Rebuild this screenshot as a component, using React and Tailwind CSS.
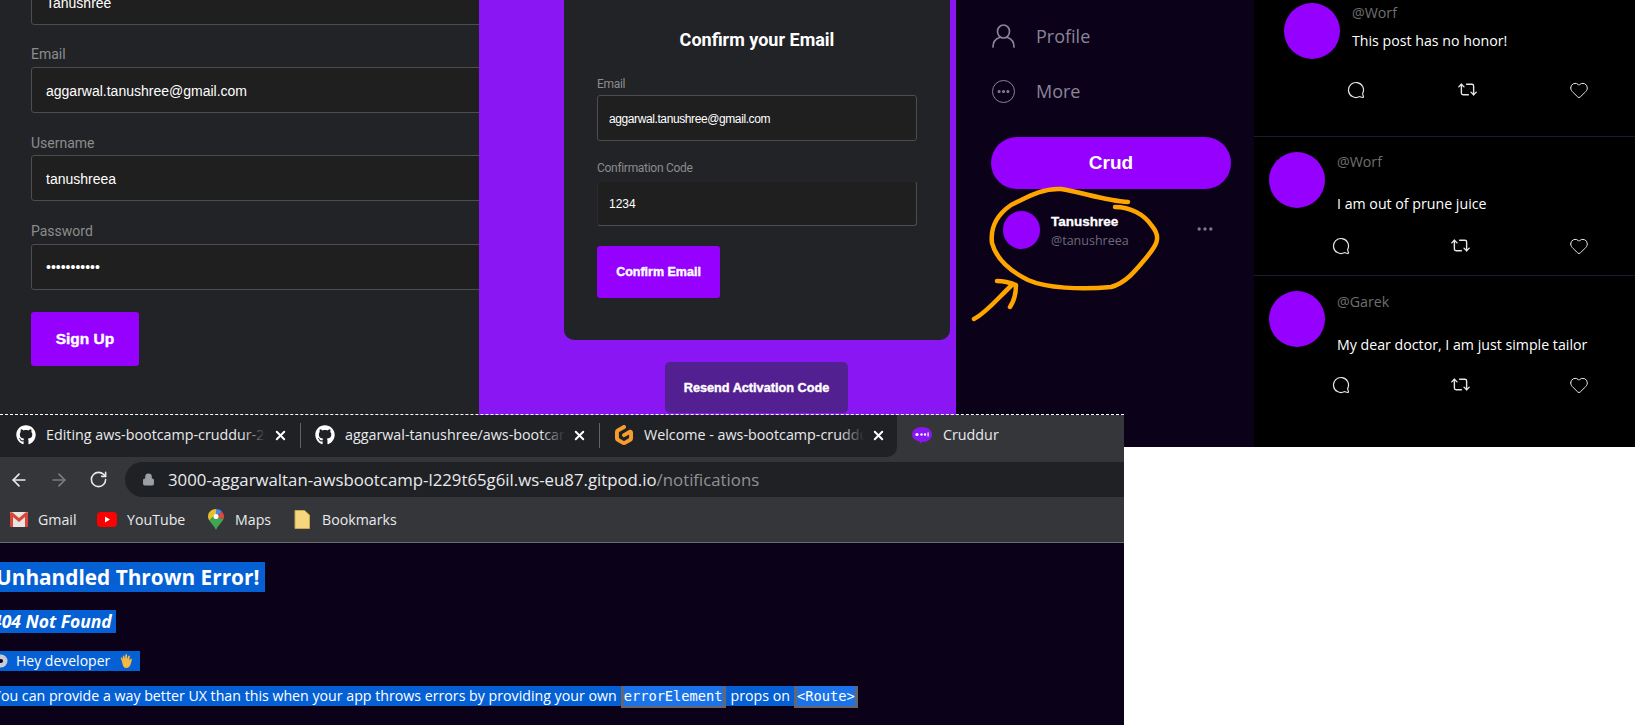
import React from 'react';
import { Ellipsis, MessageCircle, Repeat2, Heart, ArrowLeft, ArrowRight, RotateCw, Lock, X } from 'lucide-react';
import { FaGithub } from 'react-icons/fa';
import { SiGitpod } from 'react-icons/si';

const arial = 'font-["Liberation_Sans",sans-serif]';
const ui = 'font-["Open_Sans",sans-serif]';
const heavy = '[-webkit-text-stroke:0.4px_white]';

// Form input, drawn as a box since nothing here is typed into
const Field = ({ value, className, textClass }) => (
  <div className={`flex items-center rounded-[3px] border border-[#4d4d4d] bg-[#1f1f1f] text-white ${arial} ${className}`}>
    <span className={textClass}>{value}</span>
  </div>
);

const Label = ({ children, className }) => (
  <div className={`h-[18px] font-["Roboto",sans-serif] text-[14px] leading-[18px] text-[#8c8c8c] ${className}`}>{children}</div>
);

const SmallLabel = ({ children, className }) => (
  <div className={`h-[18px] font-["Roboto",sans-serif] text-[12px] leading-[18px] tracking-[-0.3px] text-[#8c8c8c] ${className}`}>{children}</div>
);

const SignUpPanel = () => (
  <div className="h-[447px] w-[479px] shrink-0 overflow-hidden bg-[#212327] pl-[31px]">
    <div className="w-[600px]">
      <Field value="Tanushree" className="-mt-[21px] h-[46px] pl-[14px]" textClass="pt-[2px] text-[14px]" />
      <Label className="mt-[20px]">Email</Label>
      <Field value="aggarwal.tanushree@gmail.com" className="mt-[4px] h-[46px] pl-[14px]" textClass="pt-[2px] text-[14px]" />
      <Label className="mt-[21px]">Username</Label>
      <Field value="tanushreea" className="mt-[3px] h-[46px] pl-[14px]" textClass="pt-[2px] text-[14px]" />
      <Label className="mt-[21px]">Password</Label>
      <Field value="•••••••••••" className="mt-[4px] h-[46px] pl-[14px]" textClass="text-[14px]" />
    </div>
    <button className={`mt-[22px] h-[54px] w-[108px] rounded-[3px] bg-[#9500ff] text-[15.500px] font-bold text-white ${arial} ${heavy}`}>Sign Up</button>
  </div>
);

const ConfirmPanel = () => (
  <div className="h-[447px] w-[477px] shrink-0 bg-[#8a17f3]">
    <div className="ml-[85px] h-[340px] w-[386px] rounded-b-[10px] bg-[#212327] px-[33px] pt-[26px]">
      <h2 className='h-[28px] text-center font-["Roboto",sans-serif] text-[18px] font-bold leading-[28px] text-white'>Confirm your Email</h2>
      <SmallLabel className="mt-[21px]">Email</SmallLabel>
      <Field value="aggarwal.tanushree@gmail.com" className="mt-[2px] h-[46px] pl-[11px]" textClass="pt-[2px] text-[12px] tracking-[-0.4px]" />
      <SmallLabel className="mt-[18px]">Confirmation Code</SmallLabel>
      <Field value="1234" className="mt-[4px] h-[45px] border-t-[#262626] border-l-[#2b2b2b] pl-[11px]" textClass="text-[12px]" />
      <button className={`mt-[20px] h-[52px] w-[123px] rounded-[3px] bg-[#9500ff] text-[12.500px] font-bold text-white ${arial} ${heavy}`}>Confirm Email</button>
    </div>
    <button className={`ml-[186px] mt-[22px] h-[51px] w-[183px] rounded-[5px] bg-[#532091] pt-[3px] text-[12.700px] font-bold text-white ${arial} ${heavy}`}>Resend Activation Code</button>
  </div>
);

const Sidebar = () => (
  <div className="relative h-[447px] w-[298px] shrink-0 bg-[#0b0118] pl-[35px] pt-[20px]">
    <div className="flex h-[32px] items-center gap-[21px] pl-[1px]">
      <svg width="23" height="24" viewBox="0 0 23 24" fill="none" stroke="#8a8598" strokeWidth="1.7" strokeLinecap="round">
        <ellipse cx="11.500" cy="7.500" rx="6" ry="6.500" />
        <path d="M1 23c0-5 2-8 6.500-9.500M22 23c0-5-2-8-6.500-9.500" />
      </svg>
      <span className={`text-[18px] text-[#8a8598] ${ui}`}>Profile</span>
    </div>
    <div className="mt-[23px] flex h-[32px] items-center gap-[21px] pl-[1px]">
      <div className="flex h-[23px] w-[23px] items-center justify-center rounded-full border-[1.5px] border-[#8a8598]">
        <Ellipsis size={15} strokeWidth={3} className="text-[#8a8598]" />
      </div>
      <span className={`text-[18px] text-[#8a8598] ${ui}`}>More</span>
    </div>
    <button className={`mt-[30px] h-[52px] w-[240px] rounded-[26px] bg-[#9500ff] text-[19px] font-bold text-white ${arial}`}>Crud</button>
    <div className="mt-[22px] flex pl-[12px]">
      <div className="h-[38px] w-[37px] rounded-full bg-[#9500ff]" />
      <div className="ml-[11px] pt-[1px]">
        <div className={`h-[20px] text-[13.500px] font-bold leading-[20px] text-white ${arial} [-webkit-text-stroke:0.3px_white]`}>Tanushree</div>
        <div className={`text-[12.500px] leading-[18px] text-[#6e6a7c] ${ui}`}>@tanushreea</div>
      </div>
      <Ellipsis size={20} className="ml-[66px] mt-[8px] text-[#7d7a85]" />
    </div>
    {/* hand drawn ring and arrow on top of the screenshot */}
    <svg className="absolute left-0 top-0" width="298" height="447" viewBox="0 0 298 447" fill="none" stroke="#ffa500" strokeWidth="4.500" strokeLinecap="round" strokeLinejoin="round">
      <path d="M172 202 C150 201 125 192 105 189 C85 188 70 198 55 205 C42 214 34 226 36 243 C40 258 52 270 72 280 C90 288 125 290 155 287 C170 283 180 270 190 258 C200 246 206 238 196 226 C188 214 174 207 159 207" />
      <path d="M18 319 C30 313 42 298 57 284 M41 281 C48 281 55 283 60 285 C60 295 58 301 54 307" />
    </svg>
  </div>
);

const Post = ({ handle, body, className, avatarX, bodyGap, iconGap }) => (
  <div className={`flex pr-[46px] ${className}`}>
    <div className={`h-[56px] w-[56px] shrink-0 rounded-full bg-[#9500ff] ${avatarX}`} />
    <div className={`ml-[12px] flex-1 ${ui}`}>
      <div className="-mt-[1px] text-[14.200px] leading-[22px] text-[#6f6f6f]">{handle}</div>
      <div className={`whitespace-nowrap text-[14.200px] leading-[22px] text-white ${bodyGap}`}>{body}</div>
      <div className={`-ml-[6px] flex items-center justify-between text-[#e6e6e6] ${iconGap}`}>
        <span className="flex w-[20px] justify-center">
          <MessageCircle size={18} strokeWidth={1.6} className="-scale-x-100" />
        </span>
        <Repeat2 size={21} strokeWidth={1.6} />
        <Heart size={20} strokeWidth={1.2} />
      </div>
    </div>
  </div>
);

const Feed = () => (
  <div className="h-[447px] flex-1 bg-black">
    <Post handle="@Worf" body="This post has no honor!" className="h-[137px] border-b border-[#1c1c30] pt-[3px]" avatarX="ml-[30px]" bodyGap="mt-[6px]" iconGap="mt-[27px]" />
    <Post handle="@Worf" body="I am out of prune juice" className="h-[139px] border-b border-[#1c1c30] pt-[15px]" avatarX="ml-[15px]" bodyGap="mt-[20px]" iconGap="mt-[20px]" />
    <Post handle="@Garek" body="My dear doctor, I am just simple tailor" className="pt-[16px]" avatarX="-mt-[1px] ml-[15px]" bodyGap="mt-[21px]" iconGap="mt-[18px]" />
  </div>
);

const Tab = ({ icon, title }) => (
  <div className="flex h-full items-center pb-[2px]">
    {icon}
    <span className={`relative ml-[10px] w-[220px] overflow-hidden whitespace-nowrap text-[14.300px] text-[#e8eaed] ${ui}`}>
      {title}
      <span className="absolute inset-y-0 right-0 w-[24px] bg-gradient-to-r from-transparent to-[#202124]" />
    </span>
    <X size={15} strokeWidth={3} className="ml-[7px] text-white" />
  </div>
);

const Divider = () => <div className="ml-[12px] mr-[14px] mt-[8px] h-[25px] w-px bg-[#5f6368]" />;

const TabStrip = () => (
  <div className="flex h-[42px] bg-[#35363a]">
    <div className="flex h-full w-[897px] rounded-br-[10px] bg-[#202124] pl-[16px]">
      <Tab icon={<FaGithub size={20} className="text-white" />} title="Editing aws-bootcamp-cruddur-2023" />
      <Divider />
      <Tab icon={<FaGithub size={20} className="text-white" />} title="aggarwal-tanushree/aws-bootcamp-cruddur" />
      <Divider />
      <Tab icon={<SiGitpod size={20} className="text-[#f59e2e]" />} title="Welcome - aws-bootcamp-cruddur" />
    </div>
    <div className="flex items-center pb-[2px] pl-[15px]">
      <svg width="20" height="20" viewBox="0 0 20 20">
        <path d="M10 2c5.500 0 10 3 10 7.500S15.500 17 11 17c-.5 0-1 0-1.500 0L8 19l-.5-2.500C3 15.500 0 13 0 9.500 0 5 4.500 2 10 2z" fill="#8a17f3" />
        <circle cx="5" cy="9.500" r="1.600" fill="#fff" />
        <circle cx="9.500" cy="9.500" r="1.200" fill="#fff" />
        <circle cx="13" cy="9.500" r="1.200" fill="#fff" />
        <rect x="15.500" y="7.500" width="1.200" height="4" fill="#fff" />
      </svg>
      <span className={`ml-[11px] text-[14.300px] text-[#e8eaed] ${ui}`}>Cruddur</span>
    </div>
  </div>
);

const Toolbar = () => (
  <div className="flex h-[40px] bg-[#35363a] pl-[9px] pt-[5px]">
    <div className="flex h-[35px] items-center">
      <ArrowLeft size={20} strokeWidth={2} className="text-[#e8eaed]" />
      <ArrowRight size={20} strokeWidth={2} className="ml-[20px] text-[#7b7d81]" />
      <RotateCw size={19} strokeWidth={2} className="ml-[20px] text-[#e8eaed]" />
    </div>
    <div className="ml-[17px] flex h-[35px] flex-1 items-center rounded-l-[18px] bg-[#202124] pl-[17px]">
      <Lock size={13} fill="#9aa0a6" strokeWidth={2} className="text-[#9aa0a6]" />
      <span className={`ml-[13px] whitespace-nowrap text-[16.800px] text-[#e8eaed] ${ui}`}>
        3000-aggarwaltan-awsbootcamp-l229t65g6il.ws-eu87.gitpod.io<span className="text-[#8f9397]">/notifications</span>
      </span>
    </div>
  </div>
);

const Bookmark = ({ icon, label, className }) => (
  <div className={`flex items-center ${className}`}>
    {icon}
    <span className={`text-[14.200px] text-[#e8eaed] ${ui}`}>{label}</span>
  </div>
);

const BookmarksBar = () => (
  <div className="flex h-[46px] items-center border-b border-[#6a6b6e] bg-[#35363a] pl-[10px]">
    <Bookmark
      className="w-[87px] gap-[10px]"
      label="Gmail"
      icon={
        <svg width="18" height="15" viewBox="0 0 18 15">
          <rect width="18" height="15" rx="1" fill="#e8e4e0" />
          <path d="M0 1.500V15h3V5l6 5 6-5v10h3V1.500C18 .5 16.500 0 15.500.5L9 6 2.500.5C1.500 0 0 .5 0 1.500z" fill="#d8453a" />
        </svg>
      }
    />
    <Bookmark
      className="w-[111px] gap-[10px]"
      label="YouTube"
      icon={
        <svg width="20" height="15" viewBox="0 0 20 15">
          <rect width="20" height="15" rx="4" fill="#ff0000" />
          <path d="M8 4.500l5 3-5 3z" fill="#fff" />
        </svg>
      }
    />
    <Bookmark
      className="w-[86px] gap-[11px]"
      label="Maps"
      icon={
        <svg width="16" height="21" viewBox="0 0 16 21">
          <path d="M8 0C3.500 0 0 3.300 0 7.500c0 1.500.5 2.800 1.300 4L8 5z" fill="#e2c12c" />
          <path d="M8 0c2.500 0 4.600 1 6 2.800L8 8z" fill="#4a86e8" />
          <path d="M14 2.800c1.300 1.300 2 3 2 4.700 0 1-.2 2-.6 2.800L8 8z" fill="#e0483a" />
          <path d="M1.300 11.500L8 5v3l7.400 2.300C13.500 14 9.500 17 8 21c-1-2.800-4.500-6-6.700-9.500z" fill="#3fa752" />
          <circle cx="8" cy="7.500" r="2.500" fill="#fff" />
        </svg>
      }
    />
    <Bookmark
      className="gap-[12px]"
      label="Bookmarks"
      icon={
        <svg width="16" height="19" viewBox="0 0 16 19">
          <path d="M1 .5h9.500L15.500 5v13.500H1z" fill="#f6d57f" stroke="#c9a94f" />
        </svg>
      }
    />
  </div>
);

const Mark = ({ children, className }) => (
  <div className={`whitespace-nowrap bg-[#0560d4] text-white ${ui} ${className}`}>{children}</div>
);

const Code = ({ children, className }) => (
  <code className={`mx-[3px] inline-block h-[22px] border-b-[2px] border-x-[3px] border-[#666570] bg-[#1a73e8] font-["DejaVu_Sans_Mono",monospace] text-[13.700px] leading-[20px] ${className}`}>{children}</code>
);

const ErrorPage = () => (
  <div className="h-[182px] overflow-hidden bg-[#0b0118] pt-[19px]">
    <Mark className="-ml-[4px] h-[30px] w-fit pr-[6px] text-[20.800px] font-bold leading-[30px]">Unhandled Thrown Error!</Mark>
    <Mark className="-ml-[8px] mt-[18px] h-[23px] w-fit pr-[4px] text-[17.500px] font-bold italic leading-[23px]">404 Not Found</Mark>
    <Mark className="mt-[18px] flex h-[20px] w-fit items-center pr-[5px] text-[14px] leading-[20px]">
      <svg width="8" height="14" viewBox="0 0 8 14" className="shrink-0">
        <circle cx="1" cy="7" r="6.500" fill="#c9ccd6" />
        <circle cx="1" cy="7" r="2" fill="#0b0118" />
      </svg>
      <span className="ml-[8px]">Hey developer</span>
      <svg width="16" height="16" viewBox="0 0 16 16" className="ml-[9px] shrink-0">
        <path d="M3 8.500L1.800 5.600C1.500 4.600 2.800 4.200 3.300 5.100L4 6.500 3.800 3.300C3.800 2.200 5.200 2.200 5.400 3.300L6 6 6.400 1.800C6.600.8 8 .8 8 2L8.200 6 9.300 3C9.700 2 11 2.500 10.800 3.600L10.300 7.500 11.500 6C12.300 5.200 13.300 6 12.800 7L12 10C11.500 13 9.500 15 7 15 4.500 15 3.500 11.500 3 8.500z" fill="#f5b942" />
      </svg>
    </Mark>
    <Mark className="-ml-[7px] mt-[15px] h-[20px] w-fit text-[14.200px] leading-[20px]">
      You can provide a way better UX than this when your app throws errors by providing your own
      <Code className="ml-[4px]">errorElement</Code>
      <span className="ml-[2px]">props on</span>
      <Code className="ml-[4px] mr-0">&lt;Route&gt;</Code>
    </Mark>
  </div>
);

const Browser = () => (
  <div className="relative z-10 -mt-[33px] w-[1124px] border-t border-dashed border-white">
    <TabStrip />
    <Toolbar />
    <BookmarksBar />
    <ErrorPage />
  </div>
);

const App = () => (
  <div className="h-[725px] w-[1635px] overflow-hidden bg-white">
    <div className="flex">
      <SignUpPanel />
      <ConfirmPanel />
      <Sidebar />
      <Feed />
    </div>
    <Browser />
  </div>
);

export default App;
